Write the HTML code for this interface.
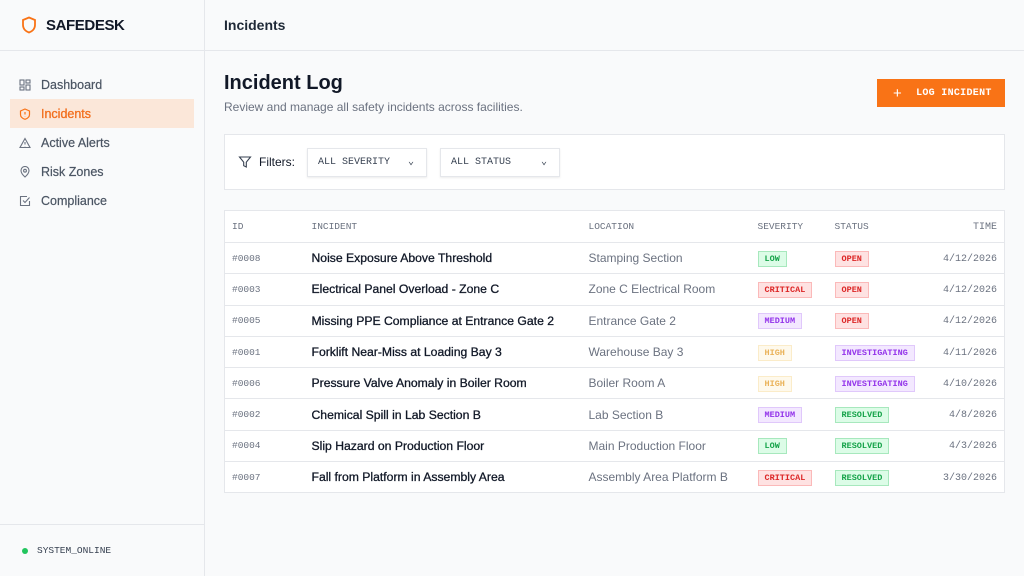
<!DOCTYPE html>
<html><head><meta charset="utf-8"><style>
*{box-sizing:border-box;margin:0;padding:0}
body{width:1024px;height:576px;overflow:hidden;font-family:"Liberation Sans",sans-serif;background:#f9fafb;color:#111827;position:relative}
.mono{font-family:"Liberation Mono",monospace}
.side{position:absolute;left:0;top:0;width:205px;height:576px;border-right:1px solid #e5e7eb;background:#f9fafb}
.logo{height:51px;border-bottom:1px solid #e5e7eb;display:flex;align-items:center;padding-left:21px;font-weight:bold;font-size:15px;letter-spacing:-0.4px}
.logo svg{margin-right:9px}
.nav{padding-top:19px}
.nav div{height:29px;margin:0 10px;display:flex;align-items:center;padding-left:9px;font-size:12.5px;color:#4b5563;-webkit-text-stroke:0.2px #4b5563}
.nav svg{margin-right:10px}
.nav .act{background:#fbe7d9;color:#f26f1e;-webkit-text-stroke:0.3px #f26f1e}
.foot{position:absolute;bottom:0;left:0;width:204px;height:52px;border-top:1px solid #e5e7eb;display:flex;align-items:center;padding-left:22px;font-size:9.5px;color:#374151}
.foot i{width:6px;height:6px;border-radius:50%;background:#22c55e;margin-right:9px}
.top{position:absolute;left:205px;top:0;right:0;height:51px;border-bottom:1px solid #e5e7eb;display:flex;align-items:center;padding-left:19px;font-size:14px;font-weight:bold;color:#1f2937}
h1{position:absolute;left:224px;top:72px;font-size:20px;font-weight:bold}
.sub{position:absolute;left:224px;top:100px;font-size:12px;color:#6b7280}
.btn{position:absolute;left:877px;top:79px;width:128px;height:28px;background:#f97316;color:#fff;font-size:10px;font-weight:bold;display:flex;align-items:center;padding-left:16px;letter-spacing:.3px}
.filt{position:absolute;left:224px;top:134px;width:781px;height:56px;background:#fff;border:1px solid #e5e7eb;display:flex;align-items:center;padding-left:13px;font-size:12px}
.sel{height:29px;width:120px;border:1px solid #e5e7eb;box-shadow:0 1px 2px rgba(0,0,0,.08);display:flex;align-items:center;justify-content:space-between;padding:0 12px 0 10px;font-size:10px;color:#374151}
table{position:absolute;left:224px;top:210px;width:781px;border-collapse:collapse;background:#fff;border:1px solid #e5e7eb}
th{height:32px;font-family:"Liberation Mono",monospace;font-weight:normal;font-size:9.5px;color:#6b7280;text-align:left;border-bottom:1px solid #e5e7eb;vertical-align:middle}
td{height:31.3px;border-bottom:1px solid #e5e7eb;font-size:12px;vertical-align:middle}
td.id{font-family:"Liberation Mono",monospace;font-size:9.5px;color:#6b7280;padding-left:7px}
th.id{padding-left:7px}
td.n{color:#111827;font-size:12.2px;-webkit-text-stroke:0.3px #111827}
td.l{color:#6b7280}
td.t,th.t{text-align:right;padding-right:7px;font-family:"Liberation Mono",monospace;font-size:10px;color:#6b7280;padding-top:2px}
.b{display:inline-block;font-family:"Liberation Mono",monospace;font-size:8.5px;font-weight:bold;padding:2px 6px;border:1px solid;line-height:10px}
.g{background:#dcfce7;color:#16a34a;border-color:#a7e8bd}
.r{background:#fee2e2;color:#dc2626;border-color:#fbb9b9}
.p{background:#f3e8ff;color:#9333ea;border-color:#e0c8fb}
.y{background:#fef9ec;color:#eab35a;border-color:#fbecc9}
</style></head><body>
<div class="side">
<div class="logo"><svg width="16" height="18" viewBox="0 0 16 18"><path d="M8 1.5L14 4v5c0 4-3 6.5-6 7.5C5 15.5 2 13 2 9V4z" fill="none" stroke="#f97316" stroke-width="1.8"/></svg>SAFEDESK</div>
<div class="nav">
<div><svg width="12" height="12" viewBox="0 0 12 12" fill="none" stroke="#6b7280" stroke-width="1.1"><rect x="1" y="1" width="4" height="5"/><rect x="7" y="1" width="4" height="3"/><rect x="1" y="8" width="4" height="3"/><rect x="7" y="6" width="4" height="5"/></svg>Dashboard</div>
<div class="act"><svg width="12" height="12" viewBox="0 0 12 12" fill="none" stroke="#f97316" stroke-width="1.2"><path d="M6 1l4.5 2v3.5c0 2.5-2 4-4.5 4.8C3.5 10.5 1.5 9 1.5 6.5V3z"/><path d="M6 4v2.5M6 8v.3"/></svg>Incidents</div>
<div><svg width="12" height="12" viewBox="0 0 12 12" fill="none" stroke="#6b7280" stroke-width="1.1"><path d="M6 1.5L11 10.5H1z"/><path d="M6 5v2.5M6 9v.2"/></svg>Active Alerts</div>
<div><svg width="12" height="12" viewBox="0 0 12 12" fill="none" stroke="#6b7280" stroke-width="1.1"><path d="M6 11s4-3.5 4-6.5a4 4 0 0 0-8 0C2 7.5 6 11 6 11z"/><circle cx="6" cy="4.7" r="1.4"/></svg>Risk Zones</div>
<div><svg width="12" height="12" viewBox="0 0 12 12" fill="none" stroke="#6b7280" stroke-width="1.1"><path d="M10.5 6v4.5h-9v-9H8"/><path d="M4 5.5l2 2 4.5-5"/></svg>Compliance</div>
</div>
<div class="foot"><i></i><span class="mono">SYSTEM_ONLINE</span></div>
</div>
<div class="top">Incidents</div>
<h1>Incident Log</h1>
<div class="sub">Review and manage all safety incidents across facilities.</div>
<div class="btn"><span style="font-size:15px;font-weight:normal;margin-right:14px">+</span><span class="mono">LOG INCIDENT</span></div>
<div class="filt"><svg width="14" height="14" viewBox="0 0 14 14" fill="none" stroke="#374151" stroke-width="1.1"><path d="M1.5 2h11L8.3 7.2V12L5.7 10.7V7.2z"/></svg><span style="margin:0 12px 0 7px;color:#111827">Filters:</span>
<div class="sel mono">ALL SEVERITY<span>⌄</span></div><div class="sel mono" style="margin-left:13px">ALL STATUS<span>⌄</span></div></div>
<table>
<tr><th class="id" style="width:87px">ID</th><th style="width:277px">INCIDENT</th><th style="width:169px">LOCATION</th><th style="width:77px">SEVERITY</th><th>STATUS</th><th class="t">TIME</th></tr>
<tr><td class="id">#0008</td><td class="n">Noise Exposure Above Threshold</td><td class="l">Stamping Section</td><td><span class="b g">LOW</span></td><td><span class="b r">OPEN</span></td><td class="t">4/12/2026</td></tr>
<tr><td class="id">#0003</td><td class="n">Electrical Panel Overload - Zone C</td><td class="l">Zone C Electrical Room</td><td><span class="b r">CRITICAL</span></td><td><span class="b r">OPEN</span></td><td class="t">4/12/2026</td></tr>
<tr><td class="id">#0005</td><td class="n">Missing PPE Compliance at Entrance Gate 2</td><td class="l">Entrance Gate 2</td><td><span class="b p">MEDIUM</span></td><td><span class="b r">OPEN</span></td><td class="t">4/12/2026</td></tr>
<tr><td class="id">#0001</td><td class="n">Forklift Near-Miss at Loading Bay 3</td><td class="l">Warehouse Bay 3</td><td><span class="b y">HIGH</span></td><td><span class="b p">INVESTIGATING</span></td><td class="t">4/11/2026</td></tr>
<tr><td class="id">#0006</td><td class="n">Pressure Valve Anomaly in Boiler Room</td><td class="l">Boiler Room A</td><td><span class="b y">HIGH</span></td><td><span class="b p">INVESTIGATING</span></td><td class="t">4/10/2026</td></tr>
<tr><td class="id">#0002</td><td class="n">Chemical Spill in Lab Section B</td><td class="l">Lab Section B</td><td><span class="b p">MEDIUM</span></td><td><span class="b g">RESOLVED</span></td><td class="t">4/8/2026</td></tr>
<tr><td class="id">#0004</td><td class="n">Slip Hazard on Production Floor</td><td class="l">Main Production Floor</td><td><span class="b g">LOW</span></td><td><span class="b g">RESOLVED</span></td><td class="t">4/3/2026</td></tr>
<tr><td class="id">#0007</td><td class="n">Fall from Platform in Assembly Area</td><td class="l">Assembly Area Platform B</td><td><span class="b r">CRITICAL</span></td><td><span class="b g">RESOLVED</span></td><td class="t">3/30/2026</td></tr>
</table>
</body></html>
